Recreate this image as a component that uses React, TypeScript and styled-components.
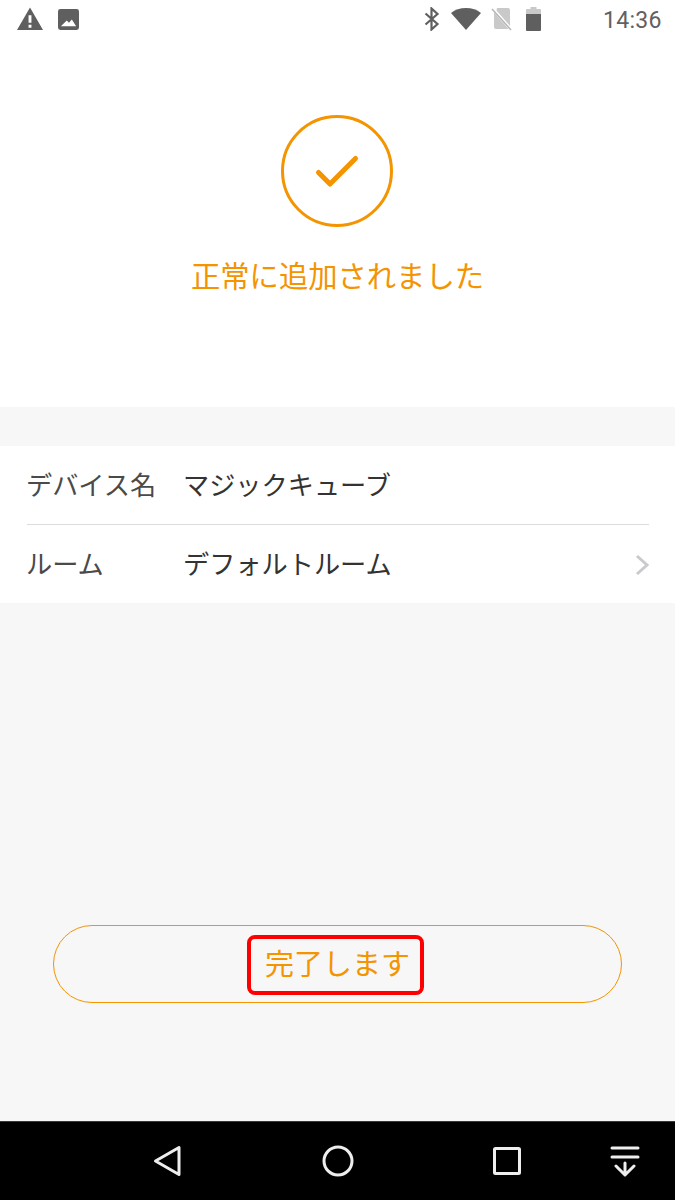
import React from "react";
import styled, { createGlobalStyle } from "styled-components";

const Global = createGlobalStyle`
  html, body { margin: 0; padding: 0; background: #f7f7f7; }
  body { font-family: "Noto Sans CJK JP", "Noto Sans", sans-serif; }
`;

const Screen = styled.div`
  width: 675px;
  height: 1200px;
  display: flex;
  flex-direction: column;
  overflow: hidden;
  background: #f7f7f7;
`;

const StatusBar = styled.div`
  height: 40px;
  display: flex;
  align-items: center;
  padding: 0 14px 2px 17px;
  background: #fff;
  color: #5f5f5f;
  box-sizing: border-box;
`;

const StatusLeft = styled.div`
  display: flex;
  align-items: center;
  gap: 15px;
`;

const StatusRight = styled.div`
  margin-left: auto;
  display: flex;
  align-items: center;
`;

const StatusIcon = styled.svg<{ $gap?: number }>`
  display: block;
  flex: none;
  margin-right: ${(p) => p.$gap ?? 0}px;
`;

const Clock = styled.span`
  width: 58px;
  padding-top: 4px;
  font-family: Roboto, sans-serif;
  font-size: 23px;
  line-height: 34px;
  letter-spacing: 0.3px;
  color: #616161;
  white-space: nowrap;
`;

const Hero = styled.section`
  height: 367px;
  background: #fff;
  display: flex;
  flex-direction: column;
  align-items: center;
  padding-top: 75px;
  box-sizing: border-box;
`;

const HeroBadge = styled.svg`
  display: block;
  margin-right: 2px;
`;

const HeroTitle = styled.h1`
  margin: 25px 0 0;
  font-size: 29.3px;
  line-height: 44px;
  font-weight: 400;
  color: #f39400;
  white-space: nowrap;
`;

const InfoCard = styled.section`
  margin-top: 39px;
  background: #fff;
  padding: 0 26px 0 27px;
`;

const InfoRow = styled.div<{ $divider?: boolean }>`
  height: ${(p) => (p.$divider ? 79 : 78)}px;
  box-sizing: border-box;
  display: flex;
  align-items: center;
  padding-bottom: 2px;
  font-size: 26.2px;
  border-bottom: ${(p) => (p.$divider ? "1px solid #dcdcdc" : "none")};
`;

const InfoLabel = styled.span`
  width: 157px;
  margin-left: -1px;
  color: #4a4a4a;
`;

const InfoValue = styled.span`
  flex: 1;
  color: #333;
`;

const Chevron = styled.svg`
  display: block;
  margin-top: 4px;
  margin-right: -1px;
`;

const Spacer = styled.div`
  flex: 1;
  display: flex;
  flex-direction: column;
  padding: 322px 53px 0;
`;

const DoneButton = styled.button`
  width: 569px;
  height: 78px;
  box-sizing: border-box;
  border: 1.5px solid #f39400;
  border-radius: 39px;
  background: transparent;
  padding: 0;
  display: flex;
  align-items: center;
  justify-content: center;
  font-family: inherit;
`;

const DoneLabel = styled.span`
  box-sizing: border-box;
  width: 177px;
  height: 60px;
  margin: 2px 4px 0 0;
  padding: 0 0 6px 4px;
  border: 4px solid #ff0000;
  border-radius: 8px;
  display: flex;
  align-items: center;
  justify-content: center;
  font-size: 29px;
  color: #f39400;
`;

const NavBar = styled.nav`
  height: 79px;
  background: #000;
  border-top: 1px solid #3a3a3a;
  box-sizing: border-box;
  display: flex;
  align-items: flex-start;
  padding: 23px 0 0 151px;
`;

const NavIcon = styled.svg<{ $gap?: number }>`
  display: block;
  flex: none;
  margin-right: ${(p) => p.$gap ?? 0}px;
  fill: none;
  stroke: #eeeeee;
  stroke-width: 3;
  stroke-linecap: round;
  stroke-linejoin: round;
`;

export default function App() {
  return (
    <Screen>
      <Global />
      <StatusBar>
        <StatusLeft>
          <StatusIcon width="26" height="24" viewBox="0 0 27 24">
            <path fillRule="evenodd" fill="#5f5f5f" d="M13.5 0 27 23.5H0ZM12 8v8h3V8Zm0 10v3h3v-3Z" />
          </StatusIcon>
          <StatusIcon width="21" height="21" viewBox="0 0 22 22">
            <path fillRule="evenodd" fill="#5f5f5f" d="M2.5 0h17A2.5 2.5 0 0 1 22 2.500v17a2.500 2.500 0 0 1-2.500 2.500h-17A2.500 2.500 0 0 1 0 19.500v-17A2.500 2.500 0 0 1 2.500 0ZM3 18h16l-4.500-7-3 3.500-2.300-2.500Z" />
          </StatusIcon>
        </StatusLeft>
        <StatusRight>
          <StatusIcon $gap={11} width="16" height="24" viewBox="0 0 16 24" fill="none" stroke="#5f5f5f" strokeWidth="2.200">
            <path d="M1.500 6.500 13.500 17 7.500 22.500V1.500L13.500 7 1.500 17.500" />
          </StatusIcon>
          <StatusIcon $gap={10} width="30" height="22" viewBox="0 0 30 22">
            <path fill="#5f5f5f" d="M15 22 0 5C4 1.800 9.200 0 15 0s11 1.800 15 5Z" />
          </StatusIcon>
          <StatusIcon $gap={13} width="22" height="24" viewBox="0 0 22 24">
            <path fill="#c9c9c9" d="M6 1h11a2 2 0 0 1 2 2v16L5.500 3.500ZM3 5.500 17.500 22H5a2 2 0 0 1-2-2Z" />
            <path stroke="#5f5f5f" strokeWidth="1.500" d="M1 2 20 23" opacity="0.45" />
          </StatusIcon>
          <StatusIcon $gap={62} width="15" height="24" viewBox="0 0 15 24">
            <path fill="#c9c9c9" d="M4.500 0h6v2H14a1 1 0 0 1 1 1v5H0V3a1 1 0 0 1 1-1h3.500Z" />
            <path fill="#5f5f5f" d="M0 7h15v16a1 1 0 0 1-1 1H1a1 1 0 0 1-1-1Z" />
          </StatusIcon>
          <Clock>14:36</Clock>
        </StatusRight>
      </StatusBar>
      <Hero>
        <HeroBadge width="112" height="112" viewBox="0 0 112 112" fill="none" stroke="#f39400">
          <circle cx="56" cy="56" r="54.500" strokeWidth="3" />
          <path d="M37.500 57.500 49 69 74.500 43.500" strokeWidth="5" strokeLinecap="round" strokeLinejoin="round" />
        </HeroBadge>
        <HeroTitle>正常に追加されました</HeroTitle>
      </Hero>
      <InfoCard>
        <InfoRow $divider>
          <InfoLabel>デバイス名</InfoLabel>
          <InfoValue>マジックキューブ</InfoValue>
        </InfoRow>
        <InfoRow>
          <InfoLabel>ルーム</InfoLabel>
          <InfoValue>デフォルトルーム</InfoValue>
          <Chevron width="16" height="22" viewBox="0 0 16 22" fill="none" stroke="#c9c9cf" strokeWidth="3">
            <path d="M3 2 13 11 3 20" />
          </Chevron>
        </InfoRow>
      </InfoCard>
      <Spacer>
        <DoneButton>
          <DoneLabel>完了します</DoneLabel>
        </DoneButton>
      </Spacer>
      <NavBar>
        <NavIcon $gap={139} width="32" height="32" viewBox="0 0 32 32">
          <path d="M28 2.500V29.500L4.500 16Z" />
        </NavIcon>
        <NavIcon $gap={137} width="32" height="32" viewBox="0 0 32 32">
          <circle cx="16" cy="16" r="14" />
        </NavIcon>
        <NavIcon $gap={86} width="32" height="32" viewBox="0 0 32 32">
          <rect x="3.500" y="3.500" width="25" height="25" rx="1" />
        </NavIcon>
        <NavIcon width="32" height="32" viewBox="0 0 32 32">
          <path d="M3 3H29M3 12H29M16 18V30M7 21 16 30 25 21" />
        </NavIcon>
      </NavBar>
    </Screen>
  );
}
